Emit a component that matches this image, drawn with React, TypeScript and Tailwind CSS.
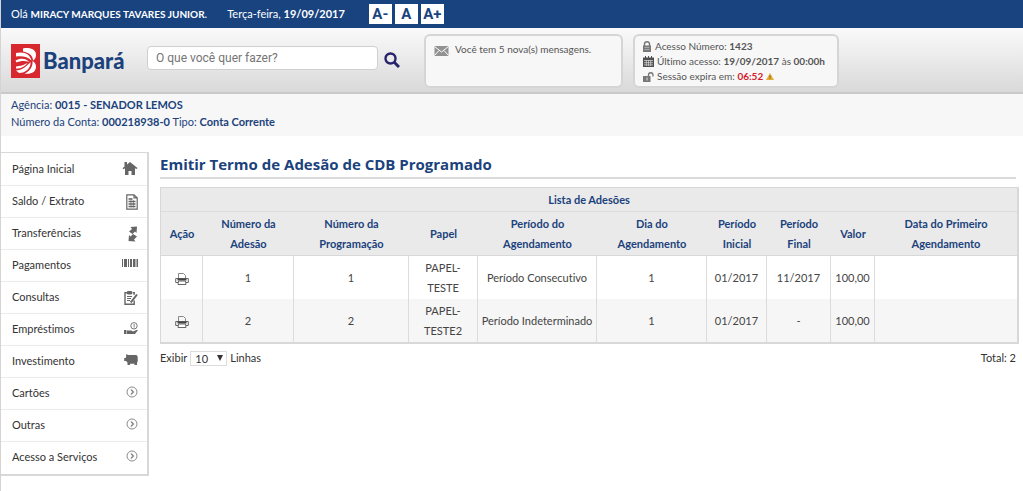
import { useState } from 'react';
import type { ReactNode } from 'react';

interface MenuItem {
  label: string;
  icon: ReactNode;
}

interface Adesao {
  adesao: string;
  programacao: string;
  papel: string;
  periodo: string;
  dia: string;
  inicial: string;
  final: string;
  valor: string;
  primeiro: string;
}

const ArrowIcon = () => (
  <svg className="w-3 h-3 -mt-1" viewBox="0 0 12 12" fill="none" stroke="#8a8a8a">
    <circle cx="6" cy="6" r="5" strokeWidth="1" />
    <path d="M5 3.5 7.3 6 5 8.5" strokeWidth="1.5" />
  </svg>
);

const menu: MenuItem[] = [
  {
    label: 'Página Inicial',
    icon: (
      <svg className="w-4 h-4 -mt-1" viewBox="0 0 16 16" fill="#666">
        <path d="M2.5 2H5v2.5L8 2l7.5 6-1 1L13 8.2V15H9.5v-4h-3v4H3V8.2L1.5 9.3l-1-1 2-1.8z" />
      </svg>
    ),
  },
  {
    label: 'Saldo / Extrato',
    icon: (
      <svg className="w-3 h-4" viewBox="0 0 12 16" fill="none" stroke="#666">
        <path d="M.8.8H8l3.2 3v11.4H.8zM8 .8v3h3" strokeWidth="1.2" />
        <path d="M2.5 5h4M2.5 7.5h7M2.5 10h7M2.5 12.5h7" strokeWidth="1.3" />
        <path d="M5 4v9.5M7.5 6v7.5" strokeWidth=".6" />
      </svg>
    ),
  },
  {
    label: 'Transferências',
    icon: (
      <svg className="w-[10px] h-4" viewBox="0 0 10 16" fill="#666">
        <path d="M2.5 1 9 .5 8.500 7 7 5.500 4.500 8 1 5.500 4 3zM7.500 15.500.5 15 1 9l1.500 1.500L5 8l4 2.500-3 3z" />
      </svg>
    ),
  },
  {
    label: 'Pagamentos',
    icon: (
      <svg className="w-4 h-2 -mt-[6px]" viewBox="0 0 16 8" fill="#666">
        <path d="M0 0h1v8H0zM2 0h3v8H2zM6 0h1v8H6zM8 0h2v8H8zM11 0h2.5v8H11zM14.5 0H16v8h-1.5z" />
      </svg>
    ),
  },
  {
    label: 'Consultas',
    icon: (
      <svg className="w-[14px] h-[14px]" viewBox="0 0 14 14" fill="none" stroke="#666">
        <path d="M8.5 1.8h1.7v2M10.2 9.5v3.7H1V1.8h2" strokeWidth="1.4" />
        <path d="M3.5.5h4V3h-4z" fill="#666" />
        <path d="M3 5.5h5M3 7.5h4M3 9.5h3" />
        <path d="m13 3.5-5.5 7-1 .8" strokeWidth="2" />
      </svg>
    ),
  },
  {
    label: 'Empréstimos',
    icon: (
      <svg className="w-[14px] h-3 -mt-1" viewBox="0 0 14 12" fill="#666">
        <circle cx="10" cy="3.8" r="3.2" fill="none" stroke="#777" />
        <path d="M9.7 2h.8v3.5h-.8zM0 8h2.5v4H0zM3 8.5h4.5l1.5 1 3.5-1.5H14l-3 4H3z" />
      </svg>
    ),
  },
  {
    label: 'Investimento',
    icon: (
      <svg className="w-[14px] h-[11px] -mt-1" viewBox="0 0 14 11" fill="#666">
        <path d="M2 .3 4.5 1H12c1 0 1.5 1 1.7 2v4c0 .8-.3 1.4-.7 1.8V11h-2.500V9.8H6V11H3.5V8.5L2 7H.2V4h1.300L2.2 3z" />
      </svg>
    ),
  },
  { label: 'Cartões', icon: <ArrowIcon /> },
  { label: 'Outras', icon: <ArrowIcon /> },
  { label: 'Acesso a Serviços', icon: <ArrowIcon /> },
];

const columns = [
  { title: 'Ação', width: 'w-[42px]' },
  { title: 'Número da Adesão', width: 'w-[91px]' },
  { title: 'Número da Programação', width: 'w-[115px]' },
  { title: 'Papel', width: 'w-[69px]' },
  { title: 'Período do Agendamento', width: 'w-[119px]' },
  { title: 'Dia do Agendamento', width: 'w-[110px]' },
  { title: 'Período Inicial', width: 'w-[60px]' },
  { title: 'Período Final', width: 'w-[64px]' },
  { title: 'Valor', width: 'w-[44px]' },
  { title: 'Data do Primeiro Agendamento', width: 'w-[142px]' },
];

const adesoes: Adesao[] = [
  {
    adesao: '1',
    programacao: '1',
    papel: 'PAPEL-TESTE',
    periodo: 'Período Consecutivo',
    dia: '1',
    inicial: '01/2017',
    final: '11/2017',
    valor: '100,00',
    primeiro: '',
  },
  {
    adesao: '2',
    programacao: '2',
    papel: 'PAPEL-TESTE2',
    periodo: 'Período Indeterminado',
    dia: '1',
    inicial: '01/2017',
    final: '-',
    valor: '100,00',
    primeiro: '',
  },
];

function Logo() {
  return (
    <a href="#" className="flex items-center gap-[3px] text-[#1b427c]">
      <svg className="w-[29px] h-[34px]" viewBox="0 0 29 34">
        <path d="M0 0h29v34H0z" fill="#d8282f" />
        <g fill="#fff">
          <path d="M12 4.500c7-1.500 13 1 13 6.500 0 3-1.500 4.500-3 5.500 0-5-4-8-10-9z" />
          <path d="M5 9c8-2 14 1 15.500 7.500C17 13 12 11.500 5 12.500z" />
          <path d="M4.500 16.500C10 13.500 15 14.500 18.500 18c-5-1.500-9-1-13 .5z" />
          <path d="M21.500 17c4.500 2 4.500 8.500 1 11-2.500 1.800-6 2-9 1.500 5-2 8.500-6.500 8-12.500z" />
          <path d="M19.500 18c.5 6-4.500 11-11.500 11l-3-2.500c6-.5 10-3.500 14.500-8.500z" />
          <path d="M16.500 19c-2.500 3.500-6 5.500-11.500 5.500v-2c4.500-.3 8-1.500 11.500-3.500z" />
        </g>
      </svg>
      <span className="text-[22px] font-black leading-[34px]">Banpará</span>
    </a>
  );
}

function TopBar() {
  return (
    <div className="h-7 bg-[#19437f] text-white flex items-center px-[10px]">
      <p>
        Olá <b className="text-[10px]">MIRACY MARQUES TAVARES JUNIOR</b>.
      </p>
      <p className="ml-5">
        Terça-feira, <b>19/09/2017</b>
      </p>
      <div className="flex gap-[3px] ml-6">
        {['A-', 'A', 'A+'].map((size) => (
          <button
            key={size}
            type="button"
            className="w-[23px] h-5 bg-white text-[#19437f] font-['Roboto'] text-[15px] leading-5 font-bold cursor-pointer"
          >
            {size}
          </button>
        ))}
      </div>
    </div>
  );
}

function Header() {
  return (
    <header className="h-[66px] flex items-start pl-[10px] bg-linear-to-b from-[#fafafa] to-[#d9d9d9] border-b-2 border-[#c9c9c9]">
      <div className="mt-4 w-[136px]">
        <Logo />
      </div>
      <form className="mt-[18px] flex items-center gap-[6px]" onSubmit={(e) => e.preventDefault()}>
        <input
          type="text"
          aria-label="Buscar"
          placeholder="O que você quer fazer?"
          className="w-[231px] h-6 px-2 bg-white border border-[#cfcfcf] rounded-[4px] font-['Roboto'] text-[12px] placeholder-[#757575]"
        />
        <button type="submit" aria-label="Pesquisar" className="mt-1 cursor-pointer">
          <svg className="w-4 h-4" viewBox="0 0 16 16" fill="none" stroke="#27246b">
            <circle cx="6.5" cy="6.5" r="5" strokeWidth="2.400" />
            <path d="m10 10 5 5" strokeWidth="3" />
          </svg>
        </button>
      </form>
      <div className="ml-6 mt-[6px] w-[199px] h-[54px] bg-[#f7f7f7] border-2 border-[#d5d5d5] rounded-md flex gap-[6px] pl-2 pt-1 text-[10px] leading-[18px] text-[#555]">
        <svg className="w-[15px] h-[10px] mt-[6px]" viewBox="0 0 14 10">
          <path d="M0 0h14v10H0z" fill="#929292" />
          <path d="m0 .5 7 5.500 7-5.500M0 9.500l4.500-5M14 9.500l-4.500-5" fill="none" stroke="#fff" />
        </svg>
        Você tem 5 nova(s) mensagens.
      </div>
      <div className="ml-[10px] mt-[6px] w-[206px] h-[54px] bg-[#f7f7f7] border-2 border-[#d5d5d5] rounded-md pl-2 pt-[3px] text-[10px] leading-[15px] text-[#555]">
        <p className="flex items-center gap-1">
          <svg className="w-2 h-[11px] shrink-0" viewBox="0 0 8 11">
            <path d="M1.5 5V3a2.500 2.300 0 0 1 5 0v2" fill="none" stroke="#777" strokeWidth="1.400" />
            <path d="M0 4.500h8V11H0z" fill="#777" />
            <path d="M1.500 6.500h5M1.500 8.500h5" stroke="#aaa" />
          </svg>
          <span>
            Acesso Número: <b>1423</b>
          </span>
        </p>
        <p className="flex items-center gap-[3px]">
          <svg className="w-[11px] h-[11px] shrink-0" viewBox="0 0 11 11">
            <path d="M0 1.500h11V11H0z" fill="#505050" />
            <path d="M1 4.500h9M1 6.700h9M1 8.900h9M3.300 4v6M5.500 4v6M7.700 4v6" stroke="#ddd" strokeWidth=".7" />
            <path d="M2.500 0v2.500M5.500 0v2.500M8.500 0v2.500" stroke="#505050" />
          </svg>
          <span>
            Último acesso: <b>19/09/2017</b> às <b>00:00h</b>
          </span>
        </p>
        <p className="flex items-center gap-[3px]">
          <svg className="w-[11px] h-[10px] shrink-0" viewBox="0 0 11 10">
            <path d="M5.500 5V3a2.200 2.200 0 0 1 4.500 0v1.500" fill="none" stroke="#777" strokeWidth="1.300" />
            <path d="M0 4h7.500v6H0z" fill="#777" />
            <path d="M4 5.500v3" stroke="#ddd" />
          </svg>
          <span>
            Sessão expira em: <b className="text-[#d3202a]">06:52</b>
          </span>
          <svg className="w-2 h-[7px] shrink-0" viewBox="0 0 8 7">
            <path d="m4 0 4 7H0z" fill="#e3ad35" />
            <path d="M4 2.500v2M4 5.200v.9" stroke="#6d531d" />
          </svg>
        </p>
      </div>
    </header>
  );
}

function PrinterIcon() {
  return (
    <svg className="w-[14px] h-3" viewBox="0 0 14 12" fill="none" stroke="#444">
      <path d="M3.500 5V.5h5l2 2V5" stroke="#888" />
      <path d="M3 9.500H.7v-4h12.600v4H11" stroke="#666" />
      <path d="M2.500 6.500h9" strokeWidth="2" />
      <path d="M3.500 8h7l.5 3.500H3z" fill="#fff" stroke="#666" />
    </svg>
  );
}

function AdesoesTable() {
  return (
    <table className="w-full table-fixed border-separate border-spacing-0 border border-b-2 border-r-2 border-[#d8d8d8] text-center leading-5 text-[#444]">
      <colgroup>
        {columns.map((col) => (
          <col key={col.title} className={col.width} />
        ))}
      </colgroup>
      <thead className="bg-[#eaeaea] text-[#1b427c]">
        <tr>
          <th colSpan={10} className="h-6 border-b border-[#dcdcdc]">
            Lista de Adesões
          </th>
        </tr>
        <tr>
          {columns.map((col) => (
            <th key={col.title} className="h-11 px-3 first:px-0 nth-7:px-2 nth-8:px-2 nth-9:px-0 nth-5:px-5 nth-10:px-6 border-b border-[#d8d8d8]">
              {col.title}
            </th>
          ))}
        </tr>
      </thead>
      <tbody>
        {adesoes.map((row) => (
          <tr key={row.adesao} className="h-[43px] even:bg-[#f6f6f6] *:border-r *:border-[#dcdcdc] *:last:border-r-0">
            <td>
              <button type="button" aria-label="Imprimir termo" className="align-middle cursor-pointer">
                <PrinterIcon />
              </button>
            </td>
            <td>{row.adesao}</td>
            <td>{row.programacao}</td>
            <td className="px-3">{row.papel}</td>
            <td className="whitespace-nowrap">{row.periodo}</td>
            <td>{row.dia}</td>
            <td>{row.inicial}</td>
            <td>{row.final}</td>
            <td>{row.valor}</td>
            <td>{row.primeiro}</td>
          </tr>
        ))}
      </tbody>
    </table>
  );
}

export default function App() {
  const [linhas, setLinhas] = useState('10');

  return (
    <div className="min-h-screen bg-white border-l border-[#d4d4d4] font-['Lato',sans-serif] [font-variant-ligatures:none] text-[11px] text-[#333]">
      <TopBar />
      <Header />
      <div className="h-[42px] bg-[#f7f7f7] pl-[10px] pt-[2px] leading-[17px] text-[#1b427c]">
        <p>
          Agência: <b>0015 - SENADOR LEMOS</b>
        </p>
        <p>
          Número da Conta: <b>000218938-0</b> Tipo: <b>Conta Corrente</b>
        </p>
      </div>
      <div className="flex items-start gap-[11px] pt-4 pr-[7px]">
        <nav className="w-[148px] shrink-0 py-[1px] border-t border-r-2 border-b-2 border-[#d8d8d8]">
          <ul>
            {menu.map((item) => (
              <li key={item.label} className="border-b border-[#ececec] last:border-b-0">
                <a href="#" className="h-[31px] flex items-center justify-between pl-[11px] pr-[9px]">
                  {item.label}
                  {item.icon}
                </a>
              </li>
            ))}
          </ul>
        </nav>
        <main className="flex-1 min-w-0">
          <h1 className="font-['Open_Sans'] text-[15px] leading-[25px] font-bold text-[#1b427c] border-b-2 border-[#dadada] mb-2">
            Emitir Termo de Adesão de CDB Programado
          </h1>
          <AdesoesTable />
          <div className="mt-[6px] flex items-center justify-between">
            <label className="flex items-center gap-[3px]">
              Exibir
              <span className="relative flex items-center">
                <select
                  value={linhas}
                  onChange={(e) => setLinhas(e.target.value)}
                  className="appearance-none w-[37px] h-[15px] pl-1 bg-white border border-[#ddd] leading-[13px]"
                >
                  <option>10</option>
                  <option>20</option>
                  <option>50</option>
                </select>
                <svg className="absolute right-1 w-[6px] h-[6px] pointer-events-none" viewBox="0 0 6 6" fill="#333">
                  <path d="M0 0h6L3 6z" />
                </svg>
              </span>
              Linhas
            </label>
            <p>Total: 2</p>
          </div>
        </main>
      </div>
    </div>
  );
}
